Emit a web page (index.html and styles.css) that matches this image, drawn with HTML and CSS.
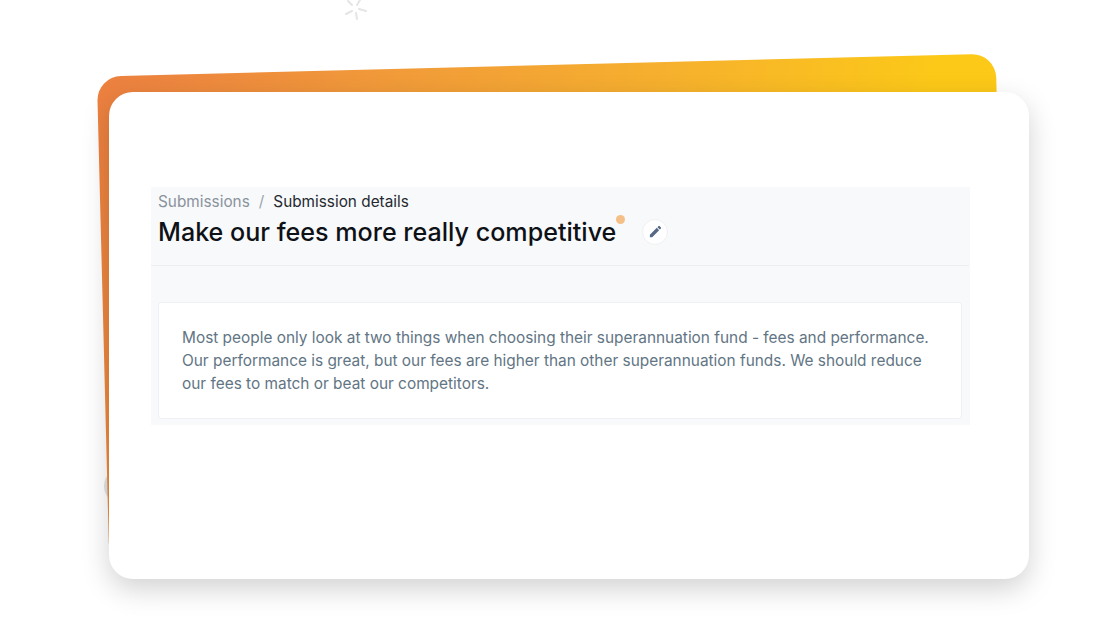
FILE: index.html
```html
<!DOCTYPE html>
<html lang="en">
<head>
<meta charset="utf-8">
<title>Submission details</title>
<link rel="stylesheet" href="styles.css">
</head>
<body>
<main class="stage">
  <svg class="spark" width="24" height="22" viewBox="0 0 24 22" aria-hidden="true">
    <path d="M4 1l4 4M16 0l-3 5M2 14l6-3M15 9l7 2M12 13l1 6"/>
  </svg>
  <div class="blob"></div>
  <div class="back-card"></div>
  <section class="card">
    <div class="panel">
      <nav class="crumbs">
        <span class="crumb-link">Submissions</span>
        <span class="crumb-sep">/</span>
        <span class="crumb-current">Submission details</span>
      </nav>
      <header class="title-row">
        <h1 class="title">Make our fees more really competitive<span class="dot"></span></h1>
        <button class="edit" type="button" aria-label="Edit">
          <svg width="15" height="15" viewBox="0 0 24 24" aria-hidden="true">
            <path d="M3 17.250V21h3.750L17.810 9.940l-3.750-3.750L3 17.250zM20.710 7.040a1 1 0 0 0 0-1.410l-2.340-2.340a1 1 0 0 0-1.410 0l-1.830 1.830 3.750 3.750 1.830-1.830z"/>
          </svg>
        </button>
      </header>
      <div class="rule"></div>
      <article class="body-card">
        <p class="text">Most people only look at two things when choosing their superannuation fund - fees and performance. Our performance is great, but our fees are higher than other superannuation funds. We should reduce our fees to match or beat our competitors.</p>
      </article>
    </div>
  </section>
</main>
</body>
</html>
```
FILE: styles.css
```css
* { box-sizing: border-box; }
html, body { margin: 0; height: 100%; background: #fff; overflow: hidden; }
body { font-family: Inter, "Liberation Sans", sans-serif; }

.stage { position: relative; width: 1120px; height: 630px; padding: 92px 0 0 109px; }

.spark { position: absolute; left: 344px; top: 0; fill: none; stroke: #e3e5e7; stroke-width: 2; stroke-linecap: round; filter: blur(.4px); }
.blob { position: absolute; left: 104px; top: 468px; width: 36px; height: 36px; border-radius: 50%; background: #dfe2e5; }

.back-card {
  position: absolute; left: 102.500px; top: 65px; width: 899px; height: 490px;
  border-radius: 24px;
  background: linear-gradient(105deg, #ec8040 0%, #f19a3a 28%, #f6b02e 55%, #fcc918 82%);
  transform: rotate(-1.46deg);
}

.card {
  position: relative; width: 920px; height: 487px;
  padding: 95px 59px 0 42px;
  border-radius: 24px; background: #fff;
  box-shadow: 0 10px 28px rgba(0, 0, 0, .18);
}

.panel { height: 238px; padding: 0 8px 0 7px; background: #f8f9fb; }

.crumbs { display: flex; align-items: center; height: 29px; font-size: 15.350px; }
.crumb-link { color: #8a939d; }
.crumb-sep { color: #9aa2ab; margin: 0 9px; }
.crumb-current { color: #262a30; }

.title-row { display: flex; align-items: center; height: 33px; }
.title { position: relative; margin: 0; font-size: 25.100px; font-weight: 500; line-height: 33px; color: #0e1116; white-space: nowrap; }
.dot { position: absolute; right: -9px; top: -1px; width: 9px; height: 9px; border-radius: 50%; background: #f5c088; }
.edit {
  display: flex; align-items: center; justify-content: center;
  width: 26px; height: 26px; margin: -2px 0 0 26px; padding: 0;
  border: 1px solid #eef0f3; border-radius: 50%; background: #fff;
}
.edit svg { fill: #566984; }

.rule { height: 1px; margin: 16px -7px 0; background: #eceef0; }

.body-card {
  margin: 36px 0 0 0; height: 116.500px; padding: 23px 23px;
  border: 1px solid #eef0f6; border-radius: 3px; background: #fff;
}
.text { margin: 0; font-size: 15.400px; line-height: 23px; color: #627584; }
```
